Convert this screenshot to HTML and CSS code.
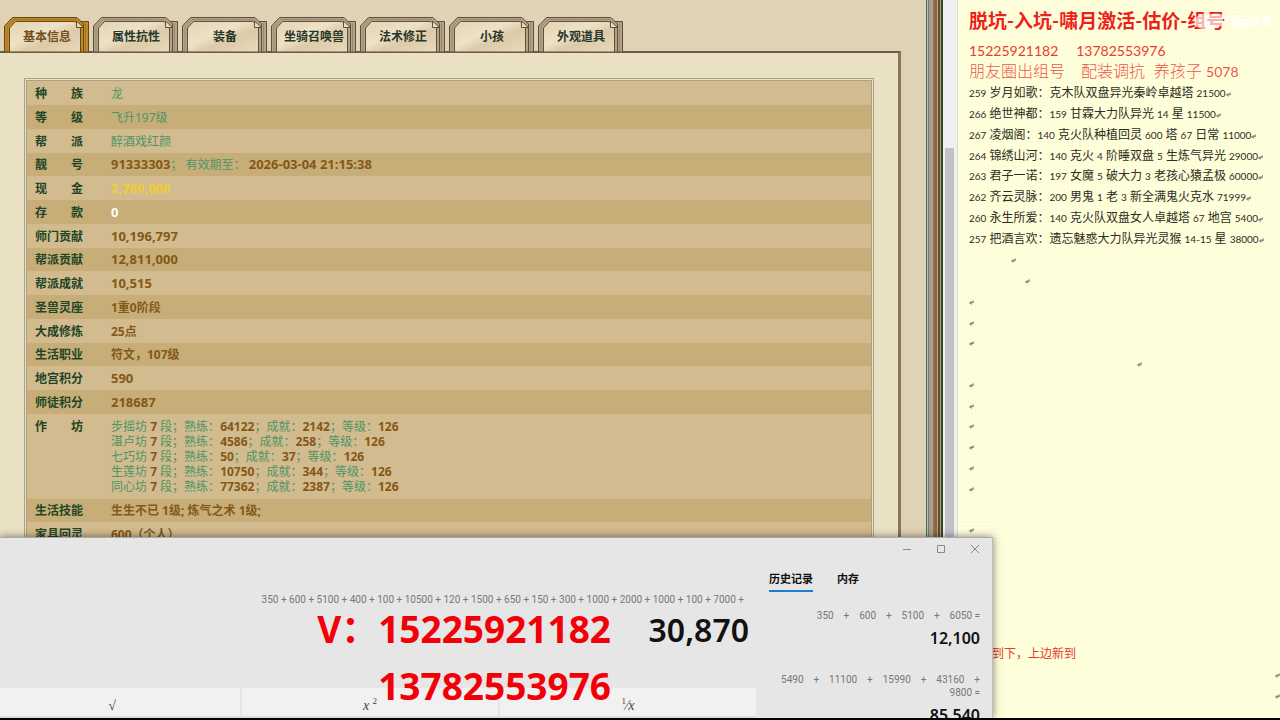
FILE: index.html
```html
<!DOCTYPE html>
<html lang="zh-CN">
<head>
<meta charset="utf-8">
<title>基本信息</title>
<link rel="stylesheet" href="styles.css">
</head>
<body>
<svg class="defs" aria-hidden="true">
  <linearGradient id="paper" x1="0" y1="0" x2="1" y2="1">
    <stop offset="0" stop-color="#e2d3b3"/><stop offset=".4" stop-color="#eee2c6"/><stop offset=".6" stop-color="#dccaa8"/><stop offset="1" stop-color="#e8dabb"/>
  </linearGradient>
  <symbol id="tab" viewBox="0 0 86 35">
    <path class="tab-rim" d="M76 4.500H84.500V35H76z"/>
    <path class="tab-line" d="M81.500 6V35"/>
    <path class="tab-rim" d="M.5 35V9L8.500 .5H73L79.500 7V35z"/>
    <path class="tab-paper" d="M5.500 35V11L11.500 4.500H71L76.500 10V35z"/>
    <path class="tab-line" d="M3 35V10L10 2.500H72"/>
    <path class="tab-fold" d="M72.500 4V10.500H79.500z"/>
  </symbol>
  <symbol id="ret" viewBox="0 0 6 6"><path d="M5.500 0V3.500H2M0 3.500L3 1.500V5.500z" fill="#888" stroke="#888" stroke-width=".4"/></symbol>
</svg>
<main class="desktop">
  <section class="game">
    <nav class="tabs">
      <button class="tab active"><svg><use href="#tab"/></svg><span>基本信息</span></button>
      <button class="tab"><svg><use href="#tab"/></svg><span>属性抗性</span></button>
      <button class="tab"><svg><use href="#tab"/></svg><span>装备</span></button>
      <button class="tab"><svg><use href="#tab"/></svg><span>坐骑召唤兽</span></button>
      <button class="tab"><svg><use href="#tab"/></svg><span>法术修正</span></button>
      <button class="tab"><svg><use href="#tab"/></svg><span>小孩</span></button>
      <button class="tab"><svg><use href="#tab"/></svg><span>外观道具</span></button>
    </nav>
    <div class="sheet">
      <table class="info">
        <tbody>
        <tr><th>种　　族</th><td>龙</td></tr>
        <tr><th>等　　级</th><td>飞升197级</td></tr>
        <tr><th>帮　　派</th><td>醉酒戏红颜</td></tr>
        <tr><th>靓　　号</th><td><b>91333303</b>； 有效期至： <b>2026-03-04 21:15:38</b></td></tr>
        <tr><th>现　　金</th><td><b class="gold">2,780,008</b></td></tr>
        <tr><th>存　　款</th><td><b class="white">0</b></td></tr>
        <tr><th>师门贡献</th><td><b>10,196,797</b></td></tr>
        <tr><th>帮派贡献</th><td><b>12,811,000</b></td></tr>
        <tr><th>帮派成就</th><td><b>10,515</b></td></tr>
        <tr><th>圣兽灵座</th><td><strong>1重0阶段</strong></td></tr>
        <tr><th>大成修炼</th><td><strong>25点</strong></td></tr>
        <tr><th>生活职业</th><td><strong>符文，107级</strong></td></tr>
        <tr><th>地宫积分</th><td><b>590</b></td></tr>
        <tr><th>师徒积分</th><td><b>218687</b></td></tr>
        <tr class="shops"><th>作　　坊</th><td>
          步摇坊 <b>7</b> 段；熟练：<b>64122</b>；成就：<b>2142</b>；等级：<b>126</b><br>
          湛卢坊 <b>7</b> 段；熟练：<b>4586</b>；成就：<b>258</b>；等级：<b>126</b><br>
          七巧坊 <b>7</b> 段；熟练：<b>50</b>；成就：<b>37</b>；等级：<b>126</b><br>
          生莲坊 <b>7</b> 段；熟练：<b>10750</b>；成就：<b>344</b>；等级：<b>126</b><br>
          同心坊 <b>7</b> 段；熟练：<b>77362</b>；成就：<b>2387</b>；等级：<b>126</b></td></tr>
        <tr><th>生活技能</th><td><strong>生生不已 1级; 炼气之术 1级;</strong></td></tr>
        <tr><th>家具回灵</th><td><strong>600（个人）</strong></td></tr>
        </tbody>
      </table>
    </div>
  </section>
  <div class="frame"></div>
  <div class="scroll"><div class="thumb"></div></div>
  <aside class="notes">
    <h1>脱坑-入坑-啸月激活-估价-组号</h1>
    <svg class="mark" viewBox="0 0 80 20" aria-hidden="true"><path d="M2 8Q8 0 18 3Q28 1 32 6L46 4V8H30V14L24 17Q14 20 6 17Q0 14 2 8z" fill="#fff" fill-opacity=".65"/><path d="M38 8h18v8H38zM57 6h10v9H57zM70 5h8v10h-8z" fill="#fff" fill-opacity=".6"/></svg>
    <p class="phones">15225921182 &nbsp; &nbsp; 13782553976</p>
    <p class="promo">朋友圈出组号　配装调抗 &nbsp;养孩子 <span>5078</span></p>
    <ul class="lines">
      <li><i>259</i> 岁月如歌：克木队双盘异光秦岭卓越塔 <i>21500</i><svg><use href="#ret"/></svg></li>
      <li><i>266</i> 绝世神都：<i>159</i> 甘霖大力队异光 <i>14</i> 星 <i>11500</i><svg><use href="#ret"/></svg></li>
      <li><i>267</i> 凌烟阁：<i>140</i> 克火队种植回灵 <i>600</i> 塔 <i>67</i> 日常 <i>11000</i><svg><use href="#ret"/></svg></li>
      <li><i>264</i> 锦绣山河：<i>140</i> 克火 <i>4</i> 阶睡双盘 <i>5</i> 生炼气异光 <i>29000</i><svg><use href="#ret"/></svg></li>
      <li><i>263</i> 君子一诺：<i>197</i> 女魔 <i>5</i> 破大力 <i>3</i> 老孩心猿孟极 <i>60000</i><svg><use href="#ret"/></svg></li>
      <li><i>262</i> 齐云灵脉：<i>200</i> 男鬼 <i>1</i> 老 <i>3</i> 新全满鬼火克水 <i>71999</i><svg><use href="#ret"/></svg></li>
      <li><i>260</i> 永生所爱：<i>140</i> 克火队双盘女人卓越塔 <i>67</i> 地宫 <i>5400</i><svg><use href="#ret"/></svg></li>
      <li><i>257</i> 把酒言欢：遗忘魅惑大力队异光灵猴 <i>14-15</i> 星 <i>38000</i><svg><use href="#ret"/></svg></li>
      <li class="in-a"><svg><use href="#ret"/></svg></li>
      <li class="in-b"><svg><use href="#ret"/></svg></li>
      <li><svg><use href="#ret"/></svg></li>
      <li><svg><use href="#ret"/></svg></li>
      <li><svg><use href="#ret"/></svg></li>
      <li class="in-c"><svg><use href="#ret"/></svg></li>
      <li><svg><use href="#ret"/></svg></li>
      <li><svg><use href="#ret"/></svg></li>
      <li><svg><use href="#ret"/></svg></li>
      <li><svg><use href="#ret"/></svg></li>
      <li><svg><use href="#ret"/></svg></li>
      <li><svg><use href="#ret"/></svg></li>
      <li></li>
      <li><svg><use href="#ret"/></svg></li>
      <li></li><li></li><li></li><li></li><li></li>
      <li class="arrive">到下，上边新到</li>
      <li class="end"><svg><use href="#ret"/></svg></li>
      <li class="end"><svg><use href="#ret"/></svg></li>
    </ul>
  </aside>

  <section class="calc">
    <header class="titlebar">
      <button aria-label="最小化"><svg viewBox="0 0 10 10"><path d="M1 5.500H9"/></svg></button>
      <button aria-label="最大化"><svg viewBox="0 0 10 10"><path d="M1.500 1.500H8.500V8.500H1.500z"/></svg></button>
      <button aria-label="关闭"><svg viewBox="0 0 10 10"><path d="M1 1L9 9M9 1L1 9"/></svg></button>
    </header>
    <div class="calc-body">
      <div class="calc-main">
        <p class="expr">350 + 600 + 5100 + 400 + 100 + 10500 + 120 + 1500 + 650 + 150 + 300 + 1000 + 2000 + 1000 + 100 + 7000 +</p>
        <output class="result">30,870</output>
        <div class="keys">
          <button class="root">√</button>
          <button><em>x</em> <sup>2</sup></button>
          <button><sup>1</sup>⁄<em>x</em></button>
        </div>
      </div>
      <div class="history">
        <div class="history-tabs"><button class="on">历史记录</button><button>内存</button></div>
        <div class="entry"><p>350    +    600    +    5100    +    6050 =</p><strong>12,100</strong></div>
        <div class="entry"><p>5490    +    11100    +    15990    +    43160    +
9800 =</p><strong>85,540</strong></div>
      </div>
    </div>
    <div class="banner">V：15225921182<br>13782553976</div>
  </section>
</main>
</body>
</html>
```
FILE: styles.css
```css
* { box-sizing: border-box; }
body {
  margin: 0;
  height: 100vh;
  overflow: hidden;
  background: #000;
  font: 12px "Noto Sans", "Noto Sans CJK SC", sans-serif;
}
p, h1, ul { margin: 0; padding: 0; }
button { border: 0; background: none; padding: 0; font: inherit; color: inherit; }
i { font-style: normal; }
.defs { position: absolute; width: 0; height: 0; }
.desktop {
  position: relative;
  display: flex;
  height: calc(100vh - 2px);
  overflow: hidden;
}

/* Character sheet */
.game {
  flex: 1;
  display: flex;
  flex-direction: column;
  padding: 17px 25px 0 0;
  background: #dfd2b5;
}
.tabs { display: flex; gap: 3px; padding-left: 4px; }
.tab {
  position: relative;
  width: 86px;
  height: 34px;
  padding: 3px 0 0;
  color: #26382a;
  font-weight: 700;
  --rim: #b3a387;
  --ink: #5e503e;
}
.tab span { position: relative; }
.tab svg { position: absolute; inset: 0; width: 86px; height: 35px; }
.tab.active { color: #71501f; --rim: #bd8a2c; --ink: #69480f; }
.tab-rim { fill: var(--rim); stroke: var(--ink); }
.tab-paper { fill: url(#paper); stroke: var(--ink); }
.tab-fold { fill: #e9ddc1; stroke: var(--ink); }
.tab-line { fill: none; stroke: var(--ink); stroke-opacity: .3; }
.sheet {
  flex: 1;
  border-top: 2px solid #6a5d4b;
  border-right: 3px solid #827761;
  padding: 25px 24px 0;
  background: #eae1c5;
}
.info {
  width: 100%;
  border-collapse: separate;
  border-spacing: 0;
  border: 3px double #aaa184;
  color: #4d9467;
}
.info tr { height: 24px; background: #d2bb8e; }
.info tr:nth-child(even) { background: #c7ae79; }
.info tr:nth-child(4n) { height: 23px; }
.info th {
  width: 84px;
  padding: 0 0 0 8px;
  text-align: left;
  color: #214525;
  white-space: nowrap;
}
.info th, .info td { line-height: 15px; vertical-align: middle; }
.info td { padding-block: 0; padding-inline: 0; }
.info b { font-size: 13px; color: #855817; }
.info strong { font-weight: 700; color: #855817; }
.info .gold { color: #f0ce38; }
.info .white { color: #fffdf0; }
.info .shops th, .info .shops td { padding-top: 5px; padding-bottom: 5px; vertical-align: top; }
.info .shops b { font-size: 12px; }

.frame {
  width: 17px;
  background: linear-gradient(90deg, #53685b 0 1px, #abc5b6 1px 2px, #628076 2px 3px, #b09b90 3px 7px, #8f7a5a 7px 8px, #8b6b3d 8px 11px, #b89f82 11px 12px, #654b2d 12px 14px, #a7a38b 14px 15px, #344624 15px);
}
.scroll {
  width: 15px;
  padding: 148px 3px 0 2px;
  background: #f1eff2;
  border-right: 1px solid #d9ded2;
}
.thumb { height: 100%; background: #c3c1c5; }

/* Notes document */
.notes {
  position: relative;
  width: 322px;
  padding: 9px 0 0 11px;
  background: radial-gradient(circle, #fcfccc 0 1px, transparent 1px) 0 0 / 4px 4px #ffffe0;
  color: #2d2d20;
  font-family: Lato, "Noto Sans CJK SC", sans-serif;
  white-space: nowrap;
  overflow: hidden;
}
.notes h1 { font-size: 19px; line-height: 24px; color: #ed211a; }
.mark { position: absolute; left: 235px; top: 11px; width: 80px; height: 20px; }
.phones { padding-top: 8px; font-size: 14px; line-height: 20px; color: #ec3a32; }
.promo { font-size: 16px; line-height: 20px; color: #ee564e; font-weight: 300; }
.promo span { font-size: 14px; font-weight: 400; }
.lines { list-style: none; }
.lines li { height: 21px; line-height: 21px; }
.lines li:nth-child(4n) { height: 20px; }
.lines i { font-size: 10px; }
.lines svg { width: 5px; height: 5px; }
.lines .in-a { padding-left: 42px; }
.lines .in-b { padding-left: 56px; }
.lines .in-c { padding-left: 168px; }
.lines .arrive { padding-left: 23px; color: #e33a2c; }
.lines .end { padding-left: 306px; }

/* Calculator */
.calc {
  position: absolute;
  left: 0;
  bottom: 0;
  width: 993px;
  height: 181px;
  display: flex;
  flex-direction: column;
  border-top: 1px solid #aaa;
  border-right: 1px solid #bbb;
  background: #e6e6e6;
  box-shadow: 0 0 8px rgba(0, 0, 0, .5);
  overflow: visible;
}
.titlebar { display: flex; justify-content: flex-end; gap: 24px; padding: 6px 12px 0 0; }
.titlebar button { height: 10px; }
.titlebar svg { display: block; width: 10px; height: 10px; fill: none; stroke: #888; }
.calc-body { flex: 1; min-height: 0; display: flex; overflow: hidden; }
.calc-main { flex: 1; display: flex; flex-direction: column; }
.expr { padding: 38px 12px 0 0; font: 10px/16px Roboto, sans-serif; text-align: right; color: #777; }
.result {
  padding-right: 7px;
  font: 600 32px/44px "Noto Sans", sans-serif;
  text-align: right;
  color: #111;
}
.keys {
  flex: 1;
  display: grid;
  grid-template-columns: 15fr 16fr 16fr;
  gap: 2px;
  margin-top: 36px;
  border-bottom: 2px solid #dcdcdc;
}
.keys button {
  padding-top: 8px;
  background: #f1f1f1;
  color: #444;
  font: 14px/20px "Liberation Serif", "DejaVu Serif", serif;
}
.keys .root { padding-right: 16px; }
.keys sup { font-size: 9px; line-height: 0; }
.history { width: 236px; padding: 12px 12px 0 13px; }
.history-tabs { display: flex; gap: 24px; margin-bottom: 17px; }
.history-tabs button { height: 26px; border-bottom: 2px solid transparent; font-size: 11px; font-weight: 700; color: #111; }
.history-tabs .on { border-color: #1c7fcd; }
.entry { margin-bottom: 23px; text-align: right; color: #777; }
.entry p { font: 10px/13px Roboto, sans-serif; white-space: pre-wrap; margin-bottom: 4px; }
.entry strong { display: block; font-size: 16px; line-height: 24px; font-weight: 600; color: #111; }
.banner {
  position: absolute;
  right: 381px;
  top: 62px;
  font-size: 37px;
  line-height: 57px;
  font-weight: 700;
  text-align: right;
  color: #f20008;
}
```
